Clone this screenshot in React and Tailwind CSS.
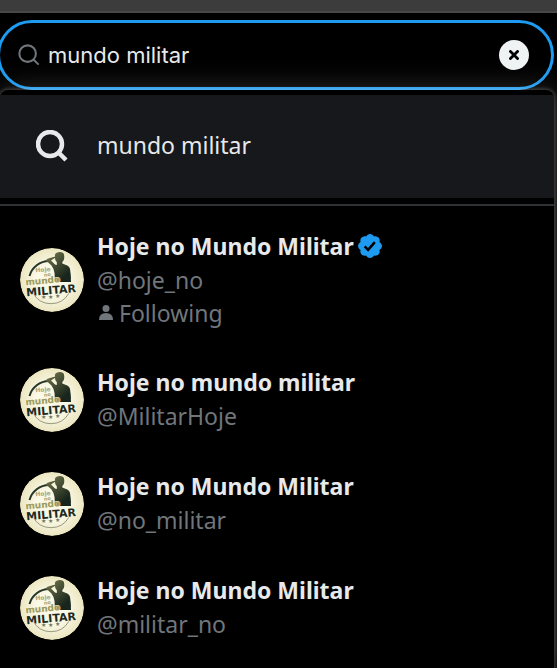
import React from "react";

const people = [
  { name: "Hoje no Mundo Militar", handle: "@hoje_no", verified: true, following: true },
  { name: "Hoje no mundo militar", handle: "@MilitarHoje" },
  { name: "Hoje no Mundo Militar", handle: "@no_militar" },
  { name: "Hoje no Mundo Militar", handle: "@militar_no" },
];

function Avatar({ id }) {
  return (
    <svg viewBox="0 0 64 64" className="size-16 shrink-0 rounded-full" aria-hidden="true">
      <defs>
        <radialGradient id={"paper" + id}>
          <stop offset="0.5" stopColor="#faf8e6" />
          <stop offset="1" stopColor="#ece6c0" />
        </radialGradient>
        <linearGradient id={"body" + id} x1="0" y1="0" x2="0.7" y2="1">
          <stop offset="0.1" stopColor="#6b7048" />
          <stop offset="0.9" stopColor="#18251c" />
        </linearGradient>
      </defs>
      <circle cx="32" cy="32" r="32" fill={"url(#paper" + id + ")"} />
      <path d="M9.500 28A20.500 20.500 0 0 1 29 13" fill="none" stroke="#26352a" strokeWidth="2" />
      <path d="M13 45a20.500 20.500 0 0 0 36 0" fill="none" stroke="#8b8f78" strokeWidth="0.9" />
      <path d="M48 20q2.500 5 2.500 11" fill="none" stroke="#3d4a3c" strokeWidth="0.9" />
      <path
        d="M35 6.500q1-2.500 5-2.500 3.500 0 4 2.500l.3 3q0 3-2 4.500v1.500l5 2q3 1.500 3 6l.7 10.500H35l-.5-9q-1-5-3-7.500l-5-4.500q-.5-1.500 1-2.300l7.500-2.200.5 1-4.500 3 4 4 1.800.5V14q-1.500-1-1.800-3.500z"
        fill={"url(#body" + id + ")"}
      />
      <g fontFamily="DejaVu Sans, sans-serif" fontWeight="700" transform="rotate(-5 32 40)">
        <text x="17" y="23" fontSize="6" fill="#a9a577">Hoje</text>
        <text x="25" y="28" fontSize="5" fill="#a9a577">no</text>
        <g stroke="#f6f3dc" strokeWidth="1" paintOrder="stroke">
          <text x="6" y="35" fontSize="9" fill="#9b9a5e">mundo</text>
          <text x="6" y="46" fontSize="11" fill="#1c2b22">MILITAR</text>
        </g>
      </g>
      <g fontSize="6" fontFamily="DejaVu Sans, sans-serif" fill="#747963">
        <text x="21" y="51">★</text>
        <text x="28" y="51">★</text>
        <text x="35" y="50">★</text>
      </g>
    </svg>
  );
}

function Verified() {
  return (
    <svg viewBox="0 0 22 22" className="size-7 shrink-0" role="img" aria-label="Verified account">
      <path
        fill="#1d9bf0"
        d="M20.396 11c-.018-.646-.215-1.275-.57-1.816-.354-.54-.852-.972-1.438-1.246.223-.607.27-1.264.14-1.897-.131-.634-.437-1.218-.882-1.687-.47-.445-1.053-.75-1.687-.882-.633-.13-1.290-.083-1.897.14-.273-.587-.704-1.086-1.245-1.440S11.647 1.620 11 1.604c-.646.017-1.273.213-1.813.568s-.969.854-1.240 1.440c-.608-.223-1.267-.272-1.902-.14-.635.130-1.220.436-1.690.882-.445.470-.749 1.055-.878 1.688-.130.633-.080 1.290.144 1.896-.587.274-1.087.705-1.443 1.245-.356.540-.555 1.170-.574 1.817.020.647.218 1.276.574 1.817.356.540.856.972 1.443 1.245-.224.606-.274 1.263-.144 1.896.130.634.433 1.218.877 1.688.470.443 1.054.747 1.687.878.633.132 1.290.084 1.897-.136.274.586.705 1.084 1.246 1.439.540.354 1.170.551 1.816.569.647-.016 1.276-.213 1.817-.567s.972-.854 1.245-1.440c.604.239 1.266.296 1.903.164.636-.132 1.220-.447 1.680-.907.460-.460.776-1.044.908-1.681s.075-1.299-.165-1.903c.586-.274 1.084-.705 1.439-1.246.354-.540.551-1.170.569-1.816z"
      />
      <path fill="none" stroke="#000" strokeWidth="2" d="M6.800 11.300l2.700 2.700 5.300-6" />
    </svg>
  );
}

function SearchIcon({ className, width }) {
  return (
    <svg viewBox="0 0 32 32" className={className} fill="none" stroke="currentColor" strokeWidth={width} aria-hidden="true">
      <circle cx="14" cy="14" r="12" />
      <path d="M22.500 22.500l7.500 7.500" />
    </svg>
  );
}

export default function App() {
  return (
    <div className="flex min-h-screen flex-col overflow-hidden bg-black font-['Noto_Sans',sans-serif] text-[#e7e9ea]">
      <div className="h-[13px] shrink-0 border-b-2 border-[#484848] bg-[#3c3c3c]" />
      <form className="mt-[7px] mr-[3px] -ml-[3px] flex h-[70px] shrink-0 items-center rounded-full border-[3px] border-[#1d9bf0] pr-[22px] pl-[18px]">
        <SearchIcon className="size-[22px] shrink-0 text-[#71767b]" width="3" />
        <input
          aria-label="Search"
          defaultValue="mundo militar"
          className="ml-2 min-w-0 flex-1 bg-transparent font-[Inter,sans-serif] text-[22px] outline-none"
        />
        <button type="button" aria-label="Clear" className="flex size-[30px] items-center justify-center rounded-full bg-[#eff3f4]">
          <svg viewBox="0 0 10 10" className="size-[10px]" stroke="#000" strokeWidth="2.800" aria-hidden="true">
            <path d="M.5.5l9 9M9.500.5l-9 9" />
          </svg>
        </button>
      </form>
      <div className="relative mr-[3px] flex-1 rounded-t-lg bg-black pt-[5px] shadow-[0_0_30px_rgba(255,255,255,0.2),0_0_3px_2px_rgba(255,255,255,0.15)]">
        <button type="button" className="flex h-[103px] w-full items-center bg-[#16181c] pb-[2px] pl-9 text-left text-[23px]">
          <SearchIcon className="mr-[29px] size-8 shrink-0" width="4.500" />
          mundo militar
        </button>
        <div className="my-[6px] h-[2px] bg-[#2f3336]" />
        <ul>
          {people.map((p, i) => (
            <li key={p.handle}>
              <a href="#" className="flex min-h-[104px] items-center gap-[13px] px-5 py-[17px]">
                <Avatar id={i} />
                <div className="min-w-0 pb-[2px] text-[23px] text-[#71767b]">
                  <div className="flex items-center gap-0.5 leading-[34px] font-bold text-[#e7e9ea]">
                    {p.name}
                    {p.verified && <Verified />}
                  </div>
                  <div className="leading-[34px]">{p.handle}</div>
                  {p.following && (
                    <div className="flex items-center gap-1 leading-[32px]">
                      <svg viewBox="0 0 18 18" className="size-[18px]" fill="currentColor" aria-hidden="true">
                        <circle cx="9" cy="4.500" r="3.500" />
                        <path d="M2 16q0-7 7-7t7 7z" />
                      </svg>
                      Following
                    </div>
                  )}
                </div>
              </a>
            </li>
          ))}
        </ul>
      </div>
    </div>
  );
}
